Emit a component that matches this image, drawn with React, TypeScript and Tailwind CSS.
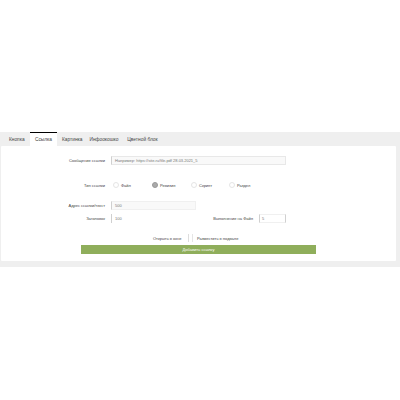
export default function App() {
  const tabs = ["Кнопка", "Ссылка", "Картинка", "Инфоокошко", "Цветной блок"];
  const radios = [
    ["Файл", "w-[39px]", false],
    ["Ревизия", "w-[39px]", true],
    ["Скрипт", "w-[38px]", false],
    ["Раздел", "w-[30px]", false],
  ] as const;
  return (
    <div className="h-[400px] w-[400px] bg-white pt-[132px] font-['Liberation_Sans',sans-serif] text-[4px] leading-[7px] text-[#444]">
      <div className="h-[135px] bg-[#efefef] pl-[1px] pr-[4px]">
        <div className="flex h-[14px] pl-[8px] text-[4.8px]">
          {tabs.map((t, i) => (
            <div
              key={t}
              className={
                i === 0
                  ? "flex w-[16px] items-center whitespace-nowrap"
                  : i === 1
                  ? "ml-[5px] mr-[5px] flex w-[27px] items-center justify-center border-t border-black bg-white"
                  : i === 2
                  ? "mr-[7px] flex items-center whitespace-nowrap"
                  : "mr-[9px] flex items-center whitespace-nowrap"
              }
            >
              {t}
            </div>
          ))}
        </div>
        <div className="h-[115px] rounded-[1px] bg-white pt-[9px]">
          <div className="flex h-[10px] items-center">
            <div className="w-[105px] pr-[1px] text-right">Сообщение ссылки</div>
            <div className="ml-[5px] flex h-[9px] w-[175px] items-center overflow-hidden whitespace-nowrap border border-[#e8e8e8] border-l-[#d0d0d0] bg-[#f9f9f9] px-[3px] text-[#777]">
              Например: https://site.ru/file.pdf 28.03.2021_5
            </div>
          </div>
          <div className="mt-[15px] flex h-[10px] items-center">
            <div className="w-[105px] pr-[1px] text-right">Тип ссылки</div>
            <div className="ml-[7px] flex">
              {radios.map(([r, w, on]) => (
                <div key={r} className={`flex items-center ${w}`}>
                  <span className={`mr-[2px] flex h-[6px] w-[6px] items-center justify-center rounded-full border ${on ? "border-[#999] bg-[#aaa]" : "border-[#e5e5e5] bg-white"}`} />
                  <span>{r}</span>
                </div>
              ))}
            </div>
          </div>
          <div className="mt-[11px] flex h-[9px] items-center">
            <div className="w-[105px] pr-[1px] text-right">Адрес ссылки/текст</div>
            <div className="ml-[5px] flex h-[9px] w-[85px] items-center border border-[#f0f0f0] border-l-[#d0d0d0] bg-[#f9f9f9] px-[3px] text-[#777]">500</div>
          </div>
          <div className="mt-[4px] flex h-[9px] items-center">
            <div className="w-[105px] pr-[1px] text-right">Заголовок</div>
            <div className="ml-[5px] flex h-[9px] w-[85px] items-center border-l border-[#d0d0d0] bg-white px-[3px] text-[#777]">100</div>
            <div className="w-[58px] whitespace-nowrap pr-[1px] text-right">Выполнение на Файл</div>
            <div className="ml-[5px] flex h-[9px] w-[27px] items-center border border-[#f0f0f0] border-l-[#d0d0d0] border-r-[#d0d0d0] px-[2px] text-[#777]">5</div>
          </div>
          <div className="mt-[11px] flex h-[8px] items-center pl-[152px]">
            <span className="w-[35px] whitespace-nowrap">Открыть в окне</span>
            <span className="h-[8px] w-px bg-[#ddd]" />
            <span className="ml-[3px] h-[8px] w-px bg-[#e5e5e5]" />
            <span className="ml-[4px] whitespace-nowrap">Разместить в подвале</span>
          </div>
          <div className="ml-[80px] mt-[3px] flex h-[9px] w-[235px] items-center justify-center bg-[#8fae5b] text-white">
            Добавить ссылку
          </div>
        </div>
      </div>
    </div>
  );
}
